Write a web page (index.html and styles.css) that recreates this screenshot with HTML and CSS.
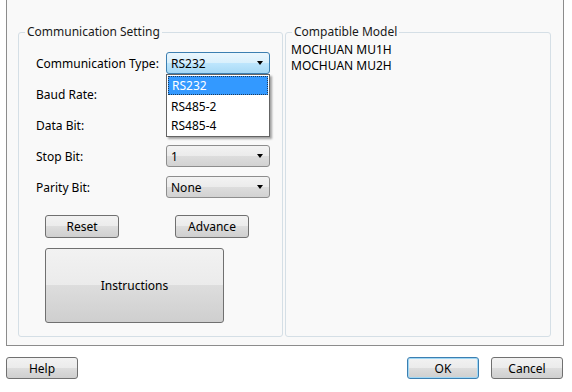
FILE: index.html
```html
<!DOCTYPE html>
<html lang="en">
<head>
  <meta charset="UTF-8">
  <title>Communication Setting</title>
  <link rel="stylesheet" href="styles.css">
</head>
<body>

  <div class="frame">
    <fieldset class="group group-left">
      <legend>Communication Setting</legend>
      <div class="rows">
        <div class="row">
          <span class="label">Communication Type:</span>
          <div class="combo combo-open">
            <span>RS232</span><i class="arrow"></i>
            <ul class="dropdown">
              <li class="selected">RS232</li>
              <li>RS485-2</li>
              <li>RS485-4</li>
            </ul>
          </div>
        </div>
        <div class="row">
          <span class="label">Baud Rate:</span>
          <div class="combo"><span></span><i class="arrow"></i></div>
        </div>
        <div class="row">
          <span class="label">Data Bit:</span>
          <div class="combo"><span></span><i class="arrow"></i></div>
        </div>
        <div class="row">
          <span class="label">Stop Bit:</span>
          <div class="combo"><span>1</span><i class="arrow"></i></div>
        </div>
        <div class="row">
          <span class="label">Parity Bit:</span>
          <div class="combo"><span>None</span><i class="arrow"></i></div>
        </div>
      </div>
      <div class="actions">
        <button class="btn btn-small">Reset</button>
        <button class="btn btn-small">Advance</button>
      </div>
      <button class="btn btn-big">Instructions</button>
    </fieldset>

    <fieldset class="group group-right">
      <legend>Compatible Model</legend>
      <ul class="models">
        <li>MOCHUAN MU1H</li>
        <li>MOCHUAN MU2H</li>
      </ul>
    </fieldset>
  </div>

  <div class="footer">
    <button class="btn btn-dialog">Help</button>
    <div class="footer-right">
      <button class="btn btn-dialog btn-default">OK</button>
      <button class="btn btn-dialog">Cancel</button>
    </div>
  </div>

</body>
</html>
```

FILE: styles.css
```css
body {
  margin: 0;
  background-color: #ffffff;
  font-family: 'Noto Sans', 'Liberation Sans', sans-serif;
  font-size: 12px;
  color: #000;
  width: 572px;
  height: 392px;
  overflow: hidden;
}

.frame {
  box-sizing: border-box;
  width: 558px;
  height: 357px;
  margin: -11px 0 0 6px;
  border: 1px solid #8c8c8c;
  background-color: #f9f9f9;
  padding: 34px 0 0 11px;
  display: flex;
  gap: 2px;
}

.group {
  margin: 0;
  padding: 0;
  border: 1px solid #d5dfe6;
  border-radius: 3px;
  box-sizing: border-box;
  height: 313px;
}

.group legend {
  margin-left: 6px;
  padding: 0 2px;
  line-height: 16px;
  color: #1a1a1a;
}

.group-left {
  width: 265px;
}

.group-right {
  width: 266px;
}

.rows {
  padding: 12px 0 0 17px;
  display: flex;
  flex-direction: column;
  gap: 9px;
}

.row {
  display: flex;
  align-items: center;
  height: 22px;
}

.label {
  width: 130px;
}

.combo {
  position: relative;
  box-sizing: border-box;
  width: 104px;
  height: 22px;
  border: 1px solid #8d8d8d;
  border-radius: 3px;
  background: linear-gradient(#f3f3f3, #ebebeb 50%, #dddddd 50%, #d2d2d2);
  display: flex;
  align-items: center;
  padding-left: 4px;
}

.combo span {
  flex: 1;
}

.arrow {
  width: 0;
  height: 0;
  margin-right: 6px;
  border-left: 3.5px solid transparent;
  border-right: 3.5px solid transparent;
  border-top: 4px solid #000;
}

.combo-open {
  border-color: #3c7fb1;
  background: linear-gradient(#eaf6fd, #d9f0fc 50%, #bee6fd 50%, #a7d9f5);
  z-index: 2;
}

.dropdown {
  position: absolute;
  top: 21px;
  left: -1px;
  width: 104px;
  box-sizing: border-box;
  margin: 0;
  padding: 1px;
  list-style: none;
  background-color: #fff;
  border: 1px solid #646464;
  box-shadow: 2px 2px 2px rgba(0, 0, 0, 0.35);
}

.dropdown li {
  height: 19px;
  line-height: 19px;
  padding-left: 3px;
}

.dropdown li.selected {
  height: 17px;
  line-height: 17px;
  margin-bottom: 2px;
  background-color: #3399ff;
  color: #fff;
  border: 1px dotted #1d3c5c;
}

.actions {
  display: flex;
  gap: 56px;
  padding: 17px 0 0 26px;
}

.btn {
  box-sizing: border-box;
  font-family: inherit;
  font-size: 12px;
  color: #000;
  border: 1px solid #707070;
  border-radius: 3px;
  background: linear-gradient(#f2f2f2, #ebebeb 50%, #dddddd 50%, #cfcfcf);
  padding: 0;
}

.btn-small {
  width: 74px;
  height: 23px;
}

.btn-big {
  display: block;
  width: 179px;
  height: 75px;
  margin: 10px 0 0 26px;
}

.models {
  list-style: none;
  margin: 0;
  padding: 2px 0 0 5px;
}

.models li {
  line-height: 16px;
}

.footer {
  display: flex;
  justify-content: space-between;
  width: 557px;
  margin: 11px 0 0 6px;
}

.footer-right {
  display: flex;
  gap: 12px;
}

.btn-dialog {
  width: 72px;
  height: 22px;
}

.btn-default {
  border-color: #3c7fb1;
  box-shadow: inset 0 0 0 1px #9fd7f5;
}
```
